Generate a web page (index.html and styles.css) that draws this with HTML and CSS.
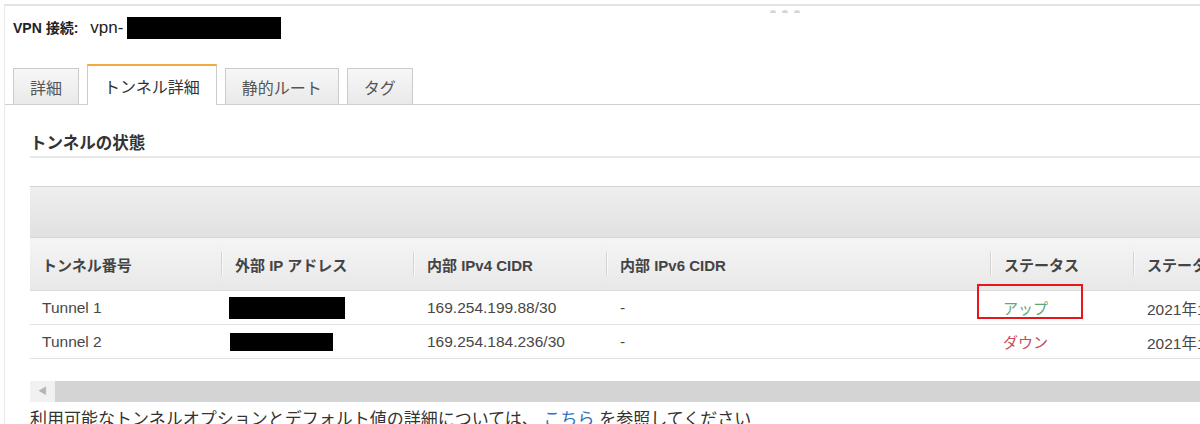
FILE: index.html
```html
<!DOCTYPE html>
<html lang="ja">
<head>
<meta charset="utf-8">
<title>VPN 接続</title>
<link rel="stylesheet" href="styles.css">
</head>
<body>
<div class="frame">
  <div class="handle"><span></span><span></span><span></span></div>
  <div class="title"><b>VPN 接続:</b><span class="vpn">vpn-</span><span class="redact r-title"></span></div>
  <div class="tabs">
    <div class="tab">詳細</div>
    <div class="tab active">トンネル詳細</div>
    <div class="tab">静的ルート</div>
    <div class="tab">タグ</div>
  </div>
  <div class="content">
    <h2 class="section">トンネルの状態</h2>
    <div class="toolbar"></div>
    <table class="grid">
      <colgroup>
        <col class="c1"><col class="c2"><col class="c3"><col class="c4"><col class="c5"><col class="c6">
      </colgroup>
      <thead>
        <tr>
          <th class="first">トンネル番号</th>
          <th>外部 IP アドレス</th>
          <th>内部 IPv4 CIDR</th>
          <th>内部 IPv6 CIDR</th>
          <th>ステータス</th>
          <th>ステータスの最終変更</th>
        </tr>
      </thead>
      <tbody>
        <tr>
          <td class="first">Tunnel 1</td>
          <td><span class="redact r1"></span></td>
          <td>169.254.199.88/30</td>
          <td>-</td>
          <td class="st"><span class="up">アップ</span><span class="mark"></span></td>
          <td>2021年11月</td>
        </tr>
        <tr>
          <td class="first">Tunnel 2</td>
          <td><span class="redact r2"></span></td>
          <td>169.254.184.236/30</td>
          <td>-</td>
          <td class="st"><span class="down">ダウン</span></td>
          <td>2021年11月</td>
        </tr>
      </tbody>
    </table>
    <div class="scrollbar"><div class="arrow">&#9664;</div><div class="thumb"></div></div>
    <p class="note">利用可能なトンネルオプションとデフォルト値の詳細については、 <a href="#">こちら</a> を参照してください</p>
  </div>
</div>
</body>
</html>
```

FILE: styles.css
```css
html, body {
  margin: 0;
  padding: 0;
  background: #fff;
  overflow: hidden;
  width: 1200px;
  height: 424px;
}
body {
  font-family: "Liberation Sans", Arial, "Noto Sans CJK JP", sans-serif;
  color: #444;
}
.frame {
  position: relative;
  width: 1400px;
  height: 430px;
  margin: 4px 0 0 4px;
  border-top: 2px solid #e3e3e3;
  border-left: 1px solid #e8e8e8;
}
.handle {
  position: absolute;
  top: 4px;
  left: 765px;
  display: flex;
  gap: 6px;
}
.handle span {
  width: 6px;
  height: 3px;
  border-radius: 3px 3px 0 0;
  background: #d6d6d6;
}
.title {
  display: flex;
  align-items: center;
  height: 22px;
  margin-top: 11px;
  padding-left: 8px;
  font-size: 14px;
  color: #222;
  line-height: 22px;
  white-space: nowrap;
}
.title b {
  font-weight: bold;
}
.vpn {
  display: inline-block;
  width: 37px;
  margin-left: 12px;
  font-size: 17px;
  overflow: hidden;
}
.redact {
  display: inline-block;
  background: #000;
}
.r-title {
  width: 154px;
  height: 22px;
}
.tabs {
  display: flex;
  align-items: flex-end;
  gap: 8px;
  height: 40px;
  margin-top: 25px;
  padding-left: 8px;
  border-bottom: 1px solid #cfcfcf;
}
.tab {
  box-sizing: border-box;
  height: 36px;
  padding: 0 16px;
  display: flex;
  align-items: center;
  font-size: 16px;
  color: #555;
  border: 1px solid #cbcbcb;
  border-bottom: none;
  background: linear-gradient(#f7f7f7, #e9e9e9);
}
.tab.active {
  height: 41px;
  margin-bottom: -1px;
  background: #fff;
  border-top: 2px solid #f3a940;
  color: #333;
  position: relative;
}
.content {
  padding-left: 25px;
}
.section {
  margin: 26px 0 0 0;
  height: 25px;
  line-height: 24px;
  font-size: 16.5px;
  font-weight: bold;
  color: #333;
  border-bottom: 2px solid #e8e8e8;
}
.toolbar {
  box-sizing: border-box;
  height: 52px;
  margin-top: 28px;
  border-top: 1px solid #d2d2d2;
  border-bottom: 1px solid #d6d6d6;
  background: linear-gradient(#efefef, #e1e1e1);
}
.grid {
  border-collapse: collapse;
  table-layout: fixed;
  width: 1303px;
}
.c1 { width: 191px; }
.c2 { width: 192px; }
.c3 { width: 193px; }
.c4 { width: 384px; }
.c5 { width: 143px; }
.c6 { width: 200px; }
.grid th {
  position: relative;
  height: 52px;
  padding: 0 0 0 14px;
  text-align: left;
  font-size: 15px;
  font-weight: bold;
  color: #444;
  white-space: nowrap;
  background: linear-gradient(#f5f5f5, #e8e8e8);
  border-bottom: 1px solid #dcdcdc;
}
.grid th::before {
  content: "";
  position: absolute;
  left: 0;
  top: 14px;
  width: 1px;
  height: 23px;
  background: #d2d2d2;
  box-shadow: 1px 0 0 #fafafa;
}
.grid th.first::before {
  display: none;
}
.grid th.first,
.grid td.first {
  padding-left: 12px;
}
.grid td {
  position: relative;
  height: 33px;
  padding: 0 0 0 14px;
  font-size: 15.5px;
  color: #474747;
  white-space: nowrap;
  border-bottom: 1px solid #e2e2e2;
}
.grid td.st {
  padding-left: 13px;
  font-size: 15px;
}
.r1 {
  width: 116px;
  height: 22px;
  margin-left: -6px;
  vertical-align: middle;
}
.r2 {
  width: 103px;
  height: 18px;
  margin-left: -5px;
  vertical-align: middle;
}
.up {
  color: #5fa57e;
}
.down {
  color: #c74b58;
}
.mark {
  position: absolute;
  left: -13px;
  top: -7px;
  width: 102px;
  height: 31px;
  border: 2px solid #e8161b;
}
.scrollbar {
  display: flex;
  height: 21px;
  margin-top: 22px;
}
.arrow {
  width: 25px;
  background: #f1f1f1;
  color: #b5b5b5;
  font-size: 9px;
  line-height: 21px;
  padding-left: 8px;
  box-sizing: border-box;
}
.thumb {
  flex: 1;
  background: #d4d4d4;
}
.note {
  margin: 6px 0 0 0;
  font-size: 17px;
  line-height: 24px;
  color: #333;
  white-space: nowrap;
}
.note a {
  color: #2f6fc4;
  text-decoration: none;
}
```
